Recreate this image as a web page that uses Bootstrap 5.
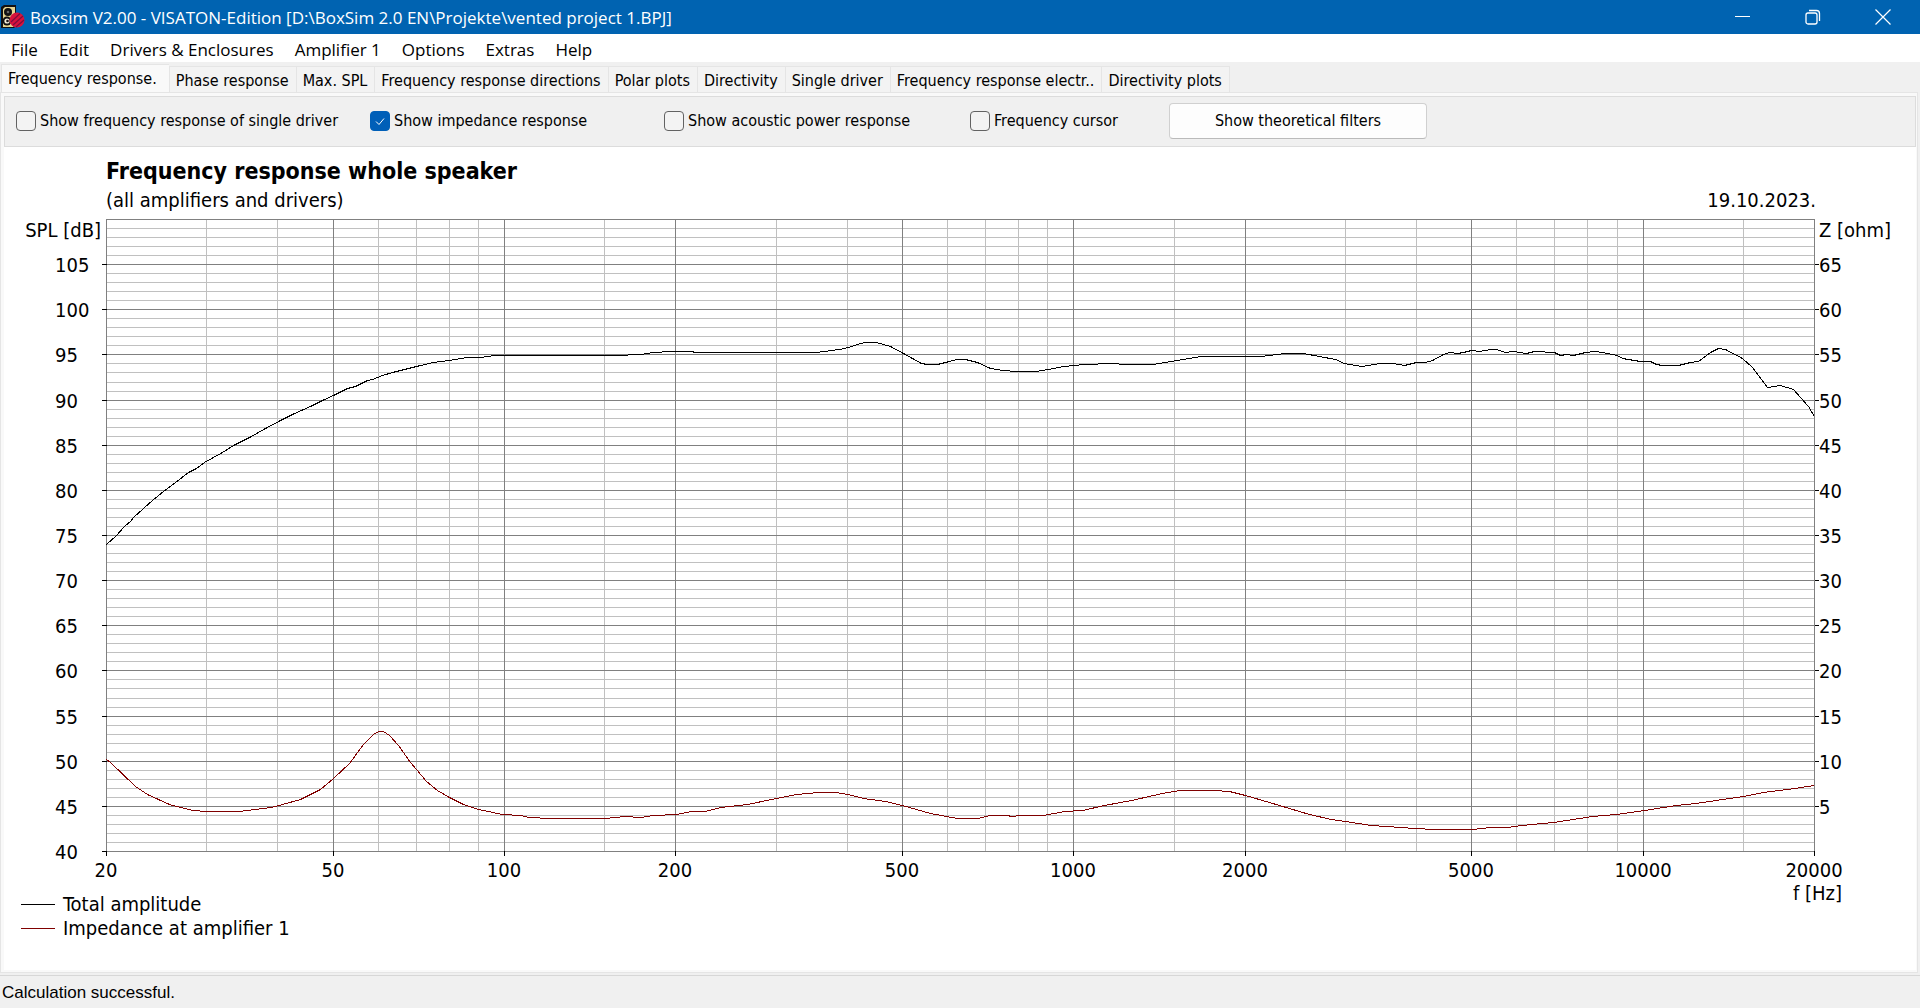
<!DOCTYPE html>
<html lang="en">
<head>
<meta charset="utf-8">
<meta name="viewport" content="width=device-width, initial-scale=1">
<title>Boxsim V2.00 - VISATON-Edition</title>
<link href="https://cdn.jsdelivr.net/npm/bootstrap@5.3.0/dist/css/bootstrap.min.css" rel="stylesheet">
<style>
  :root {
    --ui: "DejaVu Sans Condensed", "DejaVu Sans", sans-serif;
    --shell: "Open Sans", "Noto Sans", sans-serif;
  }
  body { background: #f0f0f0; color: #000; font-family: var(--ui); font-size: 16px; line-height: 20px; }
  .titlebar { background: #0063b1; color: #fff; height: 34px; font-family: var(--shell); font-size: 17px; padding: 0 2px 0 1px; }
  .titlebar span { padding: 2px 0 0 5px; }
  .caption-btn { width: 70px; height: 34px; background: none; border: 0; padding: 0; display: flex; align-items: center; justify-content: center; }
  .menubar { background: #fff; height: 28px; font-family: var(--shell); font-size: 17px; padding: 3px 0 0 11px; gap: 21px; }
  .menubar a { color: #000; text-decoration: none; }
  .tabstrip { height: 30px; padding-left: 1px; }
  .tabstrip .nav-link { color: #000; padding: 0 7px 0 6px; height: 26px; line-height: 27px; border: 1px solid #e5e5e5; border-right-width: 0; border-bottom: 0; border-radius: 0; background: #f3f3f3; white-space: nowrap; }
  .tabstrip .nav-item:last-child .nav-link { border-right-width: 1px; }
  .tabstrip .nav-link.active { height: 28px; background: #f9f9f9; color: #000; padding-right: 12px; }
  .tabpage { background: #f9f9f9; border: 1px solid #e5e5e5; margin: 0 2px 2px 0; padding: 3px 1px 2px 3px; }
  .toolpanel { background: #f0f0f0; border: 1px solid #dcdcdc; height: 51px; padding: 0 0 1px 11px; }
  .toolpanel .opt { display: flex; align-items: center; gap: 4px; white-space: nowrap; }
  .opt-a { width: 354px; } .opt-b { width: 294px; } .opt-c { width: 306px; } .opt-d { width: 199px; }
  .opt .form-check-input { width: 20px; height: 20px; margin: 0; border: 1px solid #626262; border-radius: 4px; background-color: #f3f3f3; }
  .opt .form-check-input:checked { background-color: #005fb8; border-color: #005fb8; background-size: 14px 14px;
    background-image: url("data:image/svg+xml,%3csvg xmlns='http://www.w3.org/2000/svg' viewBox='0 0 14 14'%3e%3cpath d='M3 7.5l3 3 5-6' fill='none' stroke='%23fff' stroke-width='1'/%3e%3c/svg%3e"); }
  .btn-filters { width: 258px; height: 36px; background: #fdfdfd; border: 1px solid #d0d0d0; border-bottom-color: #bababa; border-radius: 4px; padding: 0; font-size: 16px; color: #000; }
  .chartpane { background: #fff; min-height: 0; font-size: 20px; line-height: 24px; }
  .chart-head { padding: 10px 100px 2px 102px; }
  .chart-head h1 { font-size: 23px; line-height: 28px; font-weight: 700; margin: 0 0 3px; }
  #plot { display: block; width: 100%; flex: 1 1 0; min-height: 200px; }
  #plot text { font-family: var(--ui); font-size: 20px; fill: #000; }
  .chart-foot { padding: 0 74px 30px 17px; line-height: 24px; }
  .legend-row { display: flex; align-items: center; gap: 8px; }
  .legend-row i { width: 34px; border-top: 1px solid; }
  .axis-unit { margin-top: -3px; }
  .statusbar { height: 33px; border-top: 1px solid #d7d7d7; padding: 2px 0 0 2px; font-family: "Liberation Sans", Arial, sans-serif; font-size: 17px; }
</style>
<script src="https://cdn.jsdelivr.net/npm/bootstrap@5.3.0/dist/js/bootstrap.bundle.min.js"></script>
</head>
<body class="d-flex flex-column vh-100 overflow-hidden">

<header class="titlebar d-flex align-items-center flex-shrink-0">
  <svg width="24" height="24" viewBox="0 0 24 24" aria-hidden="true">
    <path d="M0 2 3 0h12v21l-2 2H0z" fill="#111"/><path d="M4 2h10v18l-2 2H2V4z" fill="#e3d492"/>
    <circle cx="7" cy="7" r="4" fill="#111"/><circle cx="7" cy="7" r="1.3" fill="#666"/>
    <circle cx="6" cy="16" r="4.500" fill="#111"/><circle cx="6" cy="16" r="2.600" fill="#f4f0dc"/><circle cx="6.500" cy="16" r="1.300" fill="#111"/>
    <circle cx="16" cy="15" r="7.500" fill="#d8123c"/>
    <path d="M10 17 19 8.500M12 20l10-9M15 22l8-7" stroke="#7d0c3c" stroke-width="1.200"/>
  </svg>
  <span>Boxsim V2.00 - VISATON-Edition [D:\BoxSim 2.0 EN\Projekte\vented project 1.BPJ]</span>
  <div class="ms-auto d-flex">
    <button class="caption-btn" type="button" aria-label="Minimize"><svg width="16" height="16"><path d="M0 7.500h15" stroke="#fff"/></svg></button>
    <button class="caption-btn" type="button" aria-label="Restore"><svg width="16" height="16" fill="none" stroke="#fff" stroke-width="1.300"><rect x="1" y="4" width="11" height="11" rx="2"/><path d="M4 1.500h7.500a3 3 0 0 1 3 3V12"/></svg></button>
    <button class="caption-btn" type="button" aria-label="Close"><svg width="16" height="16"><path d="M.5.5l15 15m0-15l-15 15" stroke="#fff" stroke-width="1.200"/></svg></button>
  </div>
</header>

<nav class="menubar d-flex align-items-center flex-shrink-0">
  <a href="#">File</a><a href="#">Edit</a><a href="#">Drivers &amp; Enclosures</a><a href="#">Amplifier 1</a><a href="#">Options</a><a href="#">Extras</a><a href="#">Help</a>
</nav>

<ul class="nav tabstrip flex-nowrap align-items-end flex-shrink-0">
  <li class="nav-item"><a class="nav-link active" href="#">Frequency response.</a></li>
  <li class="nav-item"><a class="nav-link" href="#">Phase response</a></li>
  <li class="nav-item"><a class="nav-link" href="#">Max. SPL</a></li>
  <li class="nav-item"><a class="nav-link" href="#">Frequency response directions</a></li>
  <li class="nav-item"><a class="nav-link" href="#">Polar plots</a></li>
  <li class="nav-item"><a class="nav-link" href="#">Directivity</a></li>
  <li class="nav-item"><a class="nav-link" href="#">Single driver</a></li>
  <li class="nav-item"><a class="nav-link" href="#">Frequency response electr..</a></li>
  <li class="nav-item"><a class="nav-link" href="#">Directivity plots</a></li>
</ul>

<main class="tabpage d-flex flex-column flex-grow-1">
  <form class="toolpanel d-flex align-items-center flex-shrink-0">
    <div class="opt opt-a"><input class="form-check-input" type="checkbox" id="o1"><label for="o1">Show frequency response of single driver</label></div>
    <div class="opt opt-b"><input class="form-check-input" type="checkbox" id="o2" checked><label for="o2">Show impedance response</label></div>
    <div class="opt opt-c"><input class="form-check-input" type="checkbox" id="o3"><label for="o3">Show acoustic power response</label></div>
    <div class="opt opt-d"><input class="form-check-input" type="checkbox" id="o4"><label for="o4">Frequency cursor</label></div>
    <button class="btn btn-filters" type="button">Show theoretical filters</button>
  </form>

  <section class="chartpane d-flex flex-column flex-grow-1">
    <div class="chart-head">
      <h1>Frequency response whole speaker</h1>
      <div class="d-flex justify-content-between"><span>(all amplifiers and drivers)</span><span>19.10.2023.</span></div>
    </div>
    <svg id="plot" role="img" aria-label="Frequency response and impedance"></svg>
    <div class="chart-foot d-flex justify-content-between align-items-start">
      <div class="pt-2">
        <div class="legend-row"><i style="color:#000"></i>Total amplitude</div>
        <div class="legend-row"><i style="color:#800000"></i>Impedance at amplifier 1</div>
      </div>
      <span class="axis-unit">f [Hz]</span>
    </div>
  </section>
</main>

<footer class="statusbar d-flex align-items-center flex-shrink-0">Calculation successful.</footer>

<script>
// Curves are sampled on a 1708 x 632 grid: 20 Hz..20 kHz across, 110..40 dB down; the origin is at (106, 219).
const BASE = { x: 106, y: 219, w: 1708, h: 632 };
const amplitude = "106,544 116,535 124,526 130,521 133,517 143,508 152,500 163,491 175,482 188,472 196,468 204,462 222,452 233,445 249,437 265,428 280,420 294,413 310,406 322,400 333,395 347,388 355,386 367,380 372,379 382,375 392,372 404,369 416,366 433,362 449,360 467,357 480,357 494,355 616,355 640,354 653,352 671,351 692,351 694,352 816,352 831,350 839,349 848,347 857,344 864,342 876,342 890,346 903,353 921,363 927,364 937,364 949,361 956,359 965,359 977,362 990,368 1002,370 1016,371 1035,371 1048,369 1063,366 1084,364 1112,363 1125,364 1152,364 1171,361 1201,356 1261,356 1284,353 1303,353 1319,356 1335,359 1344,363 1361,366 1380,363 1393,363 1404,365 1416,362 1425,362 1432,360 1443,354 1449,352 1457,353 1463,352 1471,350 1479,351 1490,349 1496,349 1505,352 1513,351 1526,353 1534,351 1554,352 1560,355 1566,354 1573,355 1585,352 1595,351 1607,353 1617,355 1622,358 1640,361 1650,361 1656,364 1662,365 1678,365 1690,362 1698,361 1710,352 1718,348 1725,349 1742,358 1752,367 1767,387 1780,385 1793,389 1808,406 1814,416";
const impedance = "106,759 110,762 135,786 147,794 169,804 192,810 206,811 239,811 255,809 271,807 282,804 300,799 320,789 333,778 349,763 363,744 373,734 378,731 383,731 389,735 398,745 410,762 416,769 426,781 437,790 449,797 463,804 478,809 502,814 520,815 529,817 549,818 604,818 625,816 640,817 653,815 676,814 691,811 705,811 720,807 747,804 776,798 796,794 818,792 835,792 848,794 863,798 885,801 902,805 930,813 957,818 978,818 989,815 1008,815 1010,816 1022,815 1043,815 1064,811 1082,810 1104,805 1131,800 1162,793 1180,790 1214,790 1229,791 1245,795 1269,802 1309,814 1331,819 1345,821 1371,825 1415,828 1434,829 1472,829 1490,827 1507,827 1521,825 1553,822 1592,816 1616,814 1644,810 1676,805 1695,803 1743,796 1763,792 1794,788 1814,785";

const svg = document.getElementById("plot");
function draw() {
  const W = svg.clientWidth, H = svg.clientHeight;
  const L = 102, R = W - 102, T = 5, B = H - 33;
  let s = "";
  const px = v => Math.round(v) + 0.5;
  const line = (x1, y1, x2, y2, c) => s += `<path d="M${x1} ${y1}L${x2} ${y2}" stroke="${c}" shape-rendering="crispEdges"/>`;
  const text = (x, y, t, a) => s += `<text x="${x}" y="${y}" text-anchor="${a}">${t}</text>`;
  const fx = f => px(L + (R - L) * Math.log10(f / 20) / 3);
  const dy = d => px(B - (B - T) * (d - 40) / 70);
  const dark = "#808080", light = "#c0c0c0";
  const majorF = [20, 50, 100, 200, 500, 1000, 2000, 5000, 10000, 20000];
  for (let d = 41; d < 110; d++) if (d % 5) line(L, dy(d), R, dy(d), light);
  for (const k of [10, 100, 1000, 10000]) for (let m = 1; m < 10; m++) {
    const f = k * m;
    if (f > 20 && f < 20000 && !majorF.includes(f)) line(fx(f), T, fx(f), B, light);
  }
  line(fx(15000), T, fx(15000), B, light);
  line(fx(1500), T, fx(1500), B, light);
  line(fx(150), T, fx(150), B, light);
  for (let d = 40; d <= 110; d += 5) line(L, dy(d), R, dy(d), dark);
  for (const f of majorF) line(fx(f), T, fx(f), B, dark);
  for (let d = 40; d <= 105; d += 5) {
    line(L - 4, dy(d), L + 1, dy(d), "#000");
    text(51, Math.round(dy(d)) + 7, d, "start");
    if (d > 40) {
      line(R + 1, dy(d), R + 5, dy(d), "#000");
      text(R + 5, Math.round(dy(d)) + 7, d - 40, "start");
    }
  }
  for (const f of majorF) {
    line(fx(f), B, fx(f), B + 5, "#000");
    text(Math.round(fx(f)) - 1, B + 26, f, "middle");
  }
  text(L - 5, T + 18, "SPL [dB]", "end");
  text(R + 5, T + 18, "Z [ohm]", "start");
  const curve = (data, c) => {
    const pts = data.split(" ").map(p => {
      const [x, y] = p.split(",").map(Number);
      return px(L + (x - BASE.x) * (R - L) / BASE.w) + "," + px(T + (y - BASE.y) * (B - T) / BASE.h);
    });
    s += `<polyline points="${pts.join(" ")}" fill="none" stroke="${c}" shape-rendering="crispEdges"/>`;
  };
  curve(amplitude, "#000");
  curve(impedance, "#800000");
  svg.innerHTML = s;
}
draw();
addEventListener("resize", draw);
</script>
</body>
</html>
